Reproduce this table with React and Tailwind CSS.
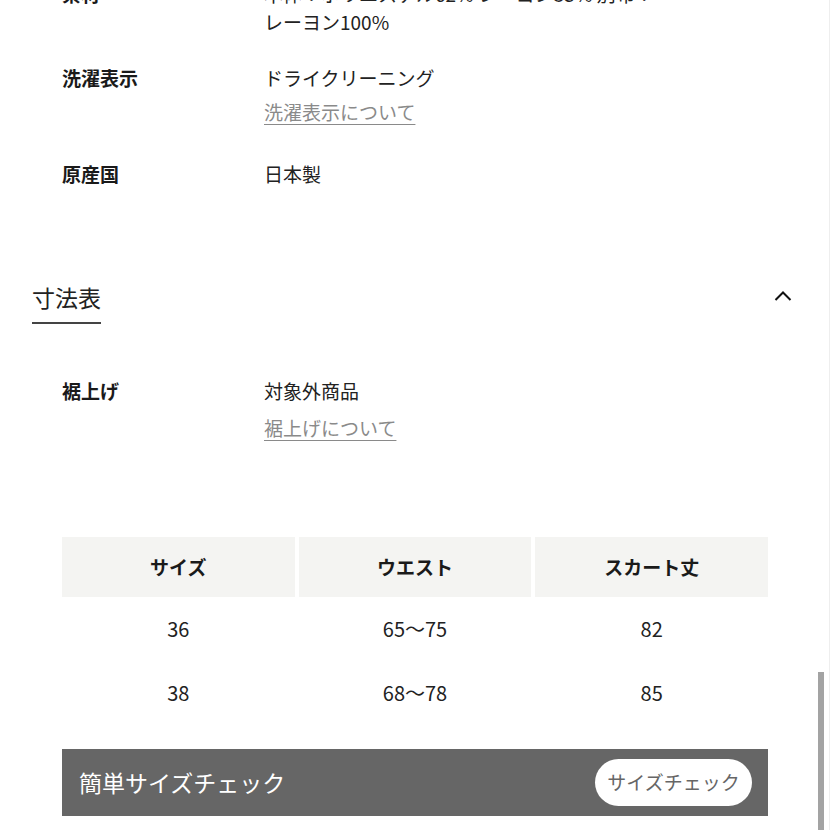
const specs = [
  {
    label: '素材',
    lines: ['本体：ポリエステル62% レーヨン35% 別布：', 'レーヨン100%'],
  },
  { label: '洗濯表示', lines: ['ドライクリーニング'], link: '洗濯表示について' },
  { label: '原産国', lines: ['日本製'] },
]

const sizes = [
  { size: '36', waist: '65〜75', length: '82' },
  { size: '38', waist: '68〜78', length: '85' },
]

function SpecRow({ label, lines, link, tight, linkGap = 'mt-[2px]' }) {
  const lh = tight ? 'leading-[28px]' : 'leading-[32px]'
  return (
    <div className="flex">
      <div className={`w-[202px] shrink-0 text-[19px] font-bold text-[#1a1a1a] ${lh}`}>{label}</div>
      <div className={`text-[19px] text-[#222] ${lh}`}>
        {lines.map((l) => (
          <div key={l}>{l}</div>
        ))}
        {link && <div className={`${linkGap} text-[#8a8a8a] underline underline-offset-4 decoration-1`}>{link}</div>}
      </div>
    </div>
  )
}

export default function App() {
  return (
    <div
      className="relative h-[830px] w-[830px] overflow-hidden bg-white"
      style={{ fontFamily: '"Noto Sans CJK JP", "Noto Sans", sans-serif' }}
    >
      <div className="mt-[-20px] flex flex-col gap-[26px] pl-[62px]">
        <SpecRow {...specs[0]} tight />
        <div className="pb-[4px]">
          <SpecRow {...specs[1]} />
        </div>
        <SpecRow {...specs[2]} />
      </div>

      {/* 寸法表 accordion */}
      <div className="mt-[91px] flex items-start justify-between pl-[32px] pr-[38px]">
        <div className="border-b-2 border-[#444] pb-[9px] text-[23px] leading-[32px] text-[#222]">寸法表</div>
        <svg width="18" height="12" viewBox="0 0 18 12" className="mt-[9px]" fill="none" stroke="#111" strokeWidth="2">
          <path d="M1.5 10 L9 2.5 L16.5 10" />
        </svg>
      </div>

      <div className="mt-[51px] pl-[62px]">
        <SpecRow label="裾上げ" lines={['対象外商品']} link="裾上げについて" linkGap="mt-[5px]" />
      </div>

      {/* size table */}
      <div className="mx-[62px] mt-[93px]">
        <div className="grid grid-cols-3 gap-[4px]">
          {['サイズ', 'ウエスト', 'スカート丈'].map((h) => (
            <div key={h} className="flex h-[60px] items-center justify-center bg-[#f4f4f2] text-[19px] font-bold text-[#1a1a1a]">
              {h}
            </div>
          ))}
        </div>
        {sizes.map((r) => (
          <div key={r.size} className="grid h-[64px] grid-cols-3 gap-[4px] text-[20px] text-[#222]">
            <div className="flex items-center justify-center">{r.size}</div>
            <div className="flex items-center justify-center">{r.waist}</div>
            <div className="flex items-center justify-center">{r.length}</div>
          </div>
        ))}
      </div>

      {/* easy size check */}
      <div className="mx-[62px] mt-[24px] flex h-[67px] items-center justify-between bg-[#666] pl-[17px] pr-[16px]">
        <span className="text-[23px] text-white">簡単サイズチェック</span>
        <button type="button" className="flex h-[47px] w-[157px] items-center justify-center rounded-full bg-white text-[19px] text-[#666]">
          サイズチェック
        </button>
      </div>

      {/* scrollbar */}
      <div className="absolute right-[6px] top-[672px] h-[160px] w-[6px] bg-[#a3a3a3]" />
      <div className="absolute right-0 top-0 h-full w-px bg-[#eee]" />
    </div>
  )
}
